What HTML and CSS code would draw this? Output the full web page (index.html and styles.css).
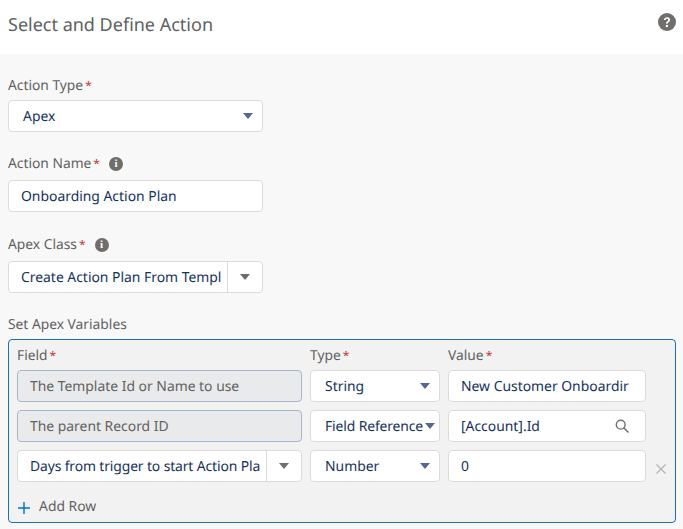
FILE: index.html
```html
<!DOCTYPE html>
<html lang="en">
<head>
    <meta charset="UTF-8">
    <title>Select and Define Action</title>
    <link rel="stylesheet" href="styles.css">
</head>
<body>
    <header class="header">
        <h1 class="title">Select and Define Action</h1>
        <svg class="help" viewBox="0 0 18 18" width="18" height="18">
            <circle cx="9" cy="9" r="9" fill="#706e6b"/>
            <path d="M5.9 7.1C6 5.2 7.3 4.2 9.1 4.2c1.8 0 3 1.1 3 2.6 0 1.2-.7 1.8-1.5 2.4-.7.5-.9.8-.9 1.5H8.1c-.1-1.2.3-1.8 1.1-2.4.6-.5 1-.8 1-1.4 0-.7-.5-1.1-1.2-1.1-.8 0-1.3.5-1.4 1.3z" fill="#fff"/>
            <circle cx="8.9" cy="13" r="1.2" fill="#fff"/>
        </svg>
    </header>

    <main class="form">
        <div class="field">
            <label class="label">Action Type<span class="req">*</span></label>
            <div class="control wide">
                <span class="text pad-select">Apex</span>
                <span class="arrow blue"></span>
            </div>
        </div>

        <div class="field roomy">
            <label class="label">Action Name<span class="req">*</span><span class="info">i</span></label>
            <div class="control wide">
                <span class="text">Onboarding Action Plan</span>
            </div>
        </div>

        <div class="field">
            <label class="label">Apex Class<span class="req">*</span><span class="info">i</span></label>
            <div class="control wide combo">
                <span class="text">Create Action Plan From Templ</span>
                <span class="combo-btn"><span class="arrow grey"></span></span>
            </div>
        </div>

        <div class="field last">
            <label class="label">Set Apex Variables</label>
            <div class="panel">
                <div class="grid">
                    <span class="label">Field<span class="req">*</span></span>
                    <span class="label">Type<span class="req">*</span></span>
                    <span class="label">Value<span class="req">*</span></span>
                    <span></span>

                    <div class="control disabled"><span class="text">The Template Id or Name to use</span></div>
                    <div class="control"><span class="text pad-select">String</span><span class="arrow blue"></span></div>
                    <div class="control"><span class="text">New Customer Onboardir</span></div>
                    <span></span>

                    <div class="control disabled"><span class="text">The parent Record ID</span></div>
                    <div class="control"><span class="text pad-select fit">Field Reference</span><span class="arrow blue tight"></span></div>
                    <div class="control">
                        <span class="text">[Account].Id</span>
                        <svg class="search" viewBox="0 0 14 14" width="14" height="14">
                            <circle cx="5.7" cy="5.7" r="4.4" fill="none" stroke="#706e6b" stroke-width="1.4"/>
                            <path d="M9 9l4 4" stroke="#706e6b" stroke-width="1.6" stroke-linecap="round"/>
                        </svg>
                    </div>
                    <span></span>

                    <div class="control combo">
                        <span class="text fit">Days from trigger to start Action Pla</span>
                        <span class="combo-btn"><span class="arrow grey"></span></span>
                    </div>
                    <div class="control"><span class="text pad-select">Number</span><span class="arrow blue"></span></div>
                    <div class="control"><span class="text">0</span></div>
                    <svg class="remove" viewBox="0 0 10 10" width="10" height="10">
                        <path d="M.5.5l9 9M9.5.5l-9 9" stroke="#b5b5b5" stroke-width="1.3"/>
                    </svg>
                </div>
                <div class="add-row">
                    <svg class="plus" viewBox="0 0 12 12" width="12" height="12">
                        <path d="M6 0v12M0 6h12" stroke="#0070d2" stroke-width="1.4"/>
                    </svg>
                    <span>Add Row</span>
                </div>
            </div>
        </div>
    </main>
</body>
</html>
```

FILE: styles.css
```css
* {
    box-sizing: border-box;
}

html, body {
    height: 100%;
}

body {
    margin: 0;
    background: #f8f8f8;
    color: #16325c;
    font-family: "Noto Sans", "Liberation Sans", sans-serif;
    font-size: 13.9px;
    text-rendering: geometricPrecision;
    overflow: hidden;
}

.header {
    height: 54px;
    background: #fff;
    display: flex;
    align-items: flex-start;
    justify-content: space-between;
    padding: 13px 7px 0 8px;
}

.title {
    margin: 0;
    font-size: 18px;
    font-weight: 400;
    line-height: 24px;
    color: #5f5f5f;
}

.form {
    padding: 23px 7px 0 8px;
}

.field {
    margin-bottom: 23px;
}

.field.roomy {
    margin-bottom: 24px;
}

.field.last {
    margin-bottom: 0;
}

.field > .label {
    display: flex;
    align-items: center;
    height: 18px;
    margin-bottom: 7px;
}

.field:first-child > .label {
    margin-bottom: 5px;
}

.label {
    color: #626262;
    font-size: 13.8px;
    line-height: 18px;
}

.req {
    color: #c23934;
    font-size: 12px;
    margin-left: 2px;
}

.info {
    width: 14px;
    height: 14px;
    margin-left: 9px;
    border-radius: 50%;
    background: #706e6b;
    color: #fff;
    font-family: "Liberation Serif", serif;
    font-size: 11px;
    font-weight: 700;
    line-height: 14px;
    text-align: center;
}

.control {
    height: 32px;
    background: #fff;
    border: 1px solid #dddbda;
    border-radius: 4px;
    display: flex;
    align-items: center;
    padding-left: 12px;
    min-width: 0;
    overflow: hidden;
}

.wide {
    width: 255px;
}

.text {
    white-space: nowrap;
    overflow: hidden;
    flex: 1;
    min-width: 0;
}

.text.fit {
    letter-spacing: -0.12px;
}

.pad-select {
    padding-left: 2px;
}

.arrow {
    flex: none;
    width: 0;
    height: 0;
    border-left: 5px solid transparent;
    border-right: 5px solid transparent;
    border-top: 6px solid #54698d;
    margin-right: 9px;
}

.arrow.grey {
    border-top-color: #706e6b;
    margin: 0;
}

.arrow.tight {
    margin-right: 4px;
}

.combo {
    padding-right: 0;
}

.combo .text {
    margin-right: 5px;
}

.combo-btn {
    flex: none;
    width: 35px;
    height: 100%;
    border-left: 1px solid #dddbda;
    display: flex;
    align-items: center;
    justify-content: center;
}

.panel {
    height: 184px;
    margin-top: -2px;
    background: #f2f2f2;
    border: 1px solid #1a6fb5;
    border-radius: 4px;
    padding: 7px 0 0 8px;
}

.grid {
    display: grid;
    grid-template-columns: 285px 130px 198px 30px;
    column-gap: 8px;
    row-gap: 8px;
    align-items: center;
}

.grid > .label {
    height: 18px;
    margin-bottom: -3px;
}

.disabled {
    background: #e9eaec;
    border-color: #a8b7c7;
    color: #626262;
}

.search {
    margin-right: 16px;
    flex: none;
}

.remove {
    margin: 6px 0 0 2px;
}

.add-row {
    display: flex;
    align-items: center;
    gap: 9px;
    margin-top: 15px;
    color: #626262;
}

.plus {
    margin: 2px 0 0 1px;
}
```
